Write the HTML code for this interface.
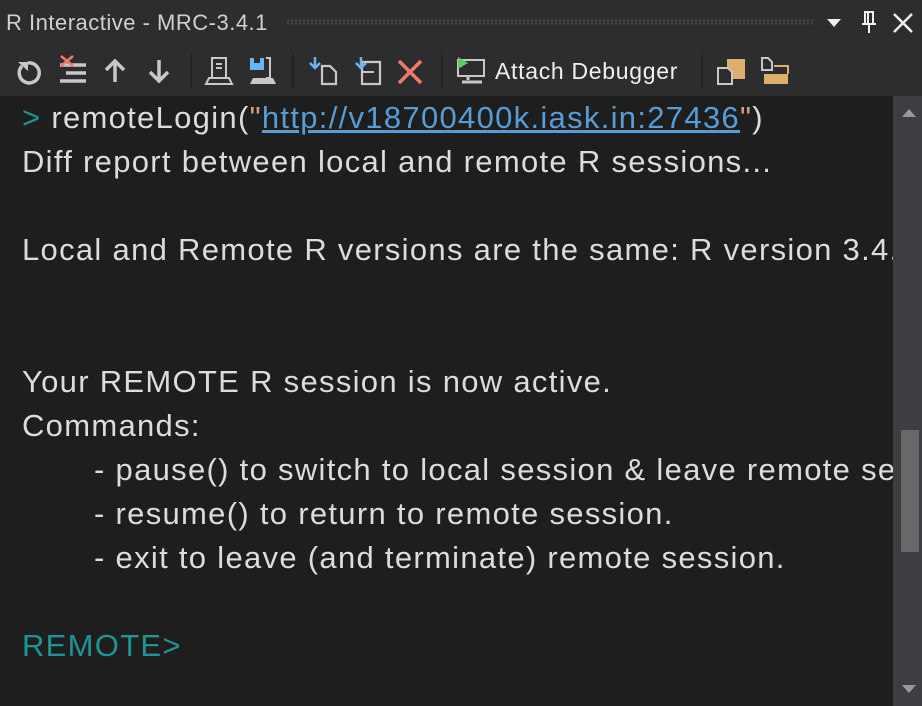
<!DOCTYPE html>
<html><head><meta charset="utf-8"><style>
*{margin:0;padding:0;box-sizing:border-box}
body{width:922px;height:706px;background:#1e1e1e;overflow:hidden;font-family:"Liberation Sans",sans-serif;position:relative}
#title{position:absolute;left:0;top:0;width:922px;height:48px;background:#2d2d30}
#title .t{position:absolute;left:6px;top:10px;font-size:22px;color:#d0d0d0;letter-spacing:0.5px;white-space:nowrap}
#dots{position:absolute;left:286px;top:19px;width:528px;height:6px;background-image:radial-gradient(circle,#4a4a4e 1px,transparent 1.2px);background-size:4px 3px}
#tb{position:absolute;left:0;top:48px;width:922px;height:48px;background:#2d2d30}
.sep{position:absolute;top:6px;width:2px;height:34px;background:#222}
#tb svg{position:absolute}
#content{position:absolute;left:0;top:96px;width:893px;height:610px;overflow:hidden;font-size:31px;line-height:44px;color:#dcdcdc;white-space:nowrap;letter-spacing:1.3px}
.l{height:44px;padding-left:22px}
.in{padding-left:94px}
.teal{color:#1e9494}
a{color:#569cd6;text-decoration:underline}
.q{color:#d69d85}
#sb{position:absolute;left:893px;top:96px;width:29px;height:610px;background:#3e3e42}
#thumb{position:absolute;left:8px;top:334px;width:18px;height:122px;background:#686868}
</style></head><body>
<div id="title"><div class="t">R Interactive - MRC-3.4.1</div><div id="dots"></div>
<svg style="position:absolute;left:826px;top:18px" width="16" height="10"><path d="M1 1h14l-7 8z" fill="#f0f0f0"/></svg>
<svg style="position:absolute;left:860px;top:10px" width="18" height="24"><path d="M5 2h8v12H5zM8 2v12M2 14h14M9 14v9" stroke="#f0f0f0" stroke-width="2" fill="none"/></svg>
<svg style="position:absolute;left:892px;top:12px" width="22" height="22"><path d="M2 2l18 18M20 2L2 20" stroke="#f0f0f0" stroke-width="2.5"/></svg>
</div>
<div id="tb">
<svg style="left:14px;top:10px" width="28" height="28"><path d="M8 8a10 10 0 1 0 6-3" stroke="#c8c8c8" stroke-width="3.5" fill="none"/><path d="M4 4h10v9z" fill="#c8c8c8"/></svg>
<svg style="left:58px;top:6px" width="30" height="32"><path d="M2 11h26M8 19h20M2 27h26" stroke="#c8c8c8" stroke-width="3.5"/><path d="M3 2l12 10M15 2L3 12" stroke="#f07a6a" stroke-width="2.5"/></svg>
<svg style="left:104px;top:10px" width="22" height="26"><path d="M11 24V4M2 12l9-9 9 9" stroke="#c8c8c8" stroke-width="3.5" fill="none"/></svg>
<svg style="left:148px;top:10px" width="22" height="26"><path d="M11 2v20M2 14l9 9 9-9" stroke="#c8c8c8" stroke-width="3.5" fill="none"/></svg>
<div class="sep" style="left:190px"></div>
<svg style="left:204px;top:8px" width="30" height="30"><path d="M8 2h14v20H8zM12 8h6M12 12h6M2 28l3-6h20l3 6z" stroke="#c8c8c8" stroke-width="2" fill="none"/></svg>
<svg style="left:248px;top:8px" width="30" height="30"><path d="M2 2h14v12H2z" fill="#6cb4f0"/><path d="M6 2h6v5H6z" fill="#2d2d30"/><path d="M18 2h4v20h-4" stroke="#c8c8c8" stroke-width="2" fill="none"/><path d="M2 28l3-6h20l3 6z" fill="#c8c8c8"/></svg>
<div class="sep" style="left:292px"></div>
<svg style="left:308px;top:8px" width="30" height="30"><path d="M14 10h8l6 6v12H14z" stroke="#c8c8c8" stroke-width="2.2" fill="none"/><path d="M7 1v10M2 7l5 5 5-5" stroke="#6cb4f0" stroke-width="2.5" fill="none"/></svg>
<svg style="left:352px;top:8px" width="30" height="30"><path d="M10 6h18v22H10z" stroke="#c8c8c8" stroke-width="2.2" fill="none"/><path d="M10 16h12" stroke="#c8c8c8" stroke-width="2"/><path d="M9 1v10M4 7l5 5 5-5" stroke="#6cb4f0" stroke-width="2.5" fill="none"/></svg>
<svg style="left:396px;top:10px" width="28" height="28"><path d="M3 3l22 22M25 3L3 25" stroke="#f07a6a" stroke-width="3.5"/></svg>
<div class="sep" style="left:441px"></div>
<svg style="left:456px;top:8px" width="30" height="30"><path d="M2 4h26v16H2z" stroke="#c8c8c8" stroke-width="2" fill="none"/><path d="M12 20v4M6 26h20" stroke="#c8c8c8" stroke-width="3"/><path d="M2 1l10 6-10 6z" fill="#5ec86a"/></svg>
<div style="position:absolute;left:495px;top:10px;font-size:23px;color:#f0f0f0;letter-spacing:0.7px;white-space:nowrap">Attach Debugger</div>
<div class="sep" style="left:701px"></div>
<svg style="left:716px;top:8px" width="30" height="30"><path d="M11 3h18v20H11z" fill="#dcb06c"/><path d="M2 12h10l4 4v12H2z" fill="#2d2d30" stroke="#c8c8c8" stroke-width="2"/></svg>
<svg style="left:760px;top:8px" width="32" height="30"><path d="M2 2h6l4 4v8H2z" stroke="#c8c8c8" stroke-width="2" fill="none"/><path d="M4 18h24v10H4z" fill="#dcb06c"/><path d="M14 10h14v8" stroke="#dcb06c" stroke-width="2" fill="none"/></svg>
</div>
<div id="content"><div class="l"><span class="teal">&gt;</span>&nbsp;remoteLogin(<span class="q">"</span><a>http://v18700400k.iask.in:27436</a><span class="q">"</span>)</div><div class="l">Diff report between local and remote R sessions...</div><div class="l"></div><div class="l">Local and Remote R versions are the same: R version 3.4.1</div><div class="l"></div><div class="l"></div><div class="l">Your REMOTE R session is now active.</div><div class="l">Commands:</div><div class="l in">- pause() to switch to local session &amp; leave remote session.</div><div class="l in">- resume() to return to remote session.</div><div class="l in">- exit to leave (and terminate) remote session.</div><div class="l"></div><div class="l teal">REMOTE&gt;</div></div>
<div id="sb">
<svg style="position:absolute;left:8px;top:12px" width="16" height="10"><path d="M1 9h14L8 1z" fill="#999"/></svg>
<div id="thumb"></div>
<svg style="position:absolute;left:8px;top:588px" width="16" height="10"><path d="M1 1h14L8 9z" fill="#999"/></svg>
</div>
</body></html>
